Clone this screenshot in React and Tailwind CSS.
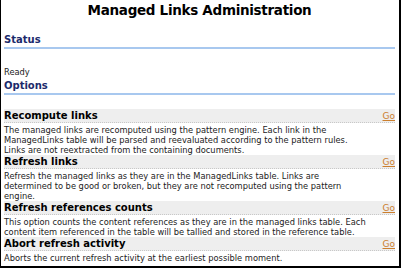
import React from "react";

const rows = [
  {
    title: "Recompute links",
    lines: [
      "The managed links are recomputed using the pattern engine. Each link in the",
      "ManagedLinks table will be parsed and reevaluated according to the pattern rules.",
      "Links are not reextracted from the containing documents.",
    ],
  },
  {
    title: "Refresh links",
    lines: [
      "Refresh the managed links as they are in the ManagedLinks table. Links are",
      "determined to be good or broken, but they are not recomputed using the pattern",
      "engine.",
    ],
  },
  {
    title: "Refresh references counts",
    lines: [
      "This option counts the content references as they are in the managed links table. Each",
      "content item referenced in the table will be tallied and stored in the reference table.",
    ],
  },
  {
    title: "Abort refresh activity",
    lines: ["Aborts the current refresh activity at the earliest possible moment."],
  },
];

export default function App() {
  return (
    <div
      className="w-[401px] h-[268px] bg-white border-l border-r-2 border-b-2 border-black overflow-hidden text-[#222]"
      style={{ fontFamily: '"DejaVu Sans", Verdana, sans-serif' }}
    >
      <div className="pl-[3px] pr-[4px]">
        <div className="h-[20px] pt-[1px] text-center text-[13.5px] tracking-[-0.3px] leading-[18px] font-bold text-black">
          Managed Links Administration
        </div>
        <div className="mt-[14px] text-[10px] leading-[12px] font-bold text-[#1b2a6b]">Status</div>
        <div className="h-[2px] bg-[#a8c8ef] mt-[1px]" />
        <div className="mt-[18px] text-[8.3px] leading-[10px]">Ready</div>
        <div className="mt-[3px] text-[10px] leading-[12px] font-bold text-[#1b2a6b]">Options</div>
        <div className="h-[2px] bg-[#a8c8ef] mt-[1px]" />
        <div className="mt-[14px]">
          {rows.map((r) => (
            <div key={r.title}>
              <div className="h-[14px] bg-[#eeeeee] border-b border-dotted border-[#c8c8c8] mb-[2px] flex items-end justify-between">
                <span className="text-[10px] leading-[13px] font-bold text-black">{r.title}</span>
                <a href="#" className="text-[9px] leading-[12px] text-[#cc7f2e] underline">Go</a>
              </div>
              {r.lines.map((l, i) => (
                <div key={i} className="text-[8.3px] leading-[10px] whitespace-nowrap">
                  {l}
                </div>
              ))}
            </div>
          ))}
        </div>
      </div>
    </div>
  );
}
